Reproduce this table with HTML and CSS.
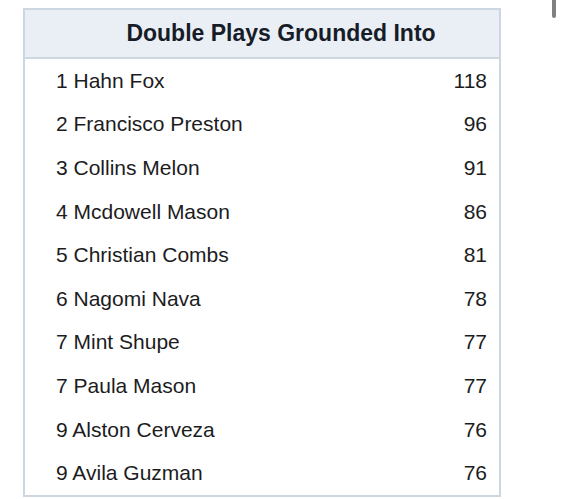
FILE: index.html
```html
<!DOCTYPE html>
<html>
<head>
<meta charset="utf-8">
<link rel="stylesheet" href="styles.css">
</head>
<body>
<div class="scroll-thumb"></div>
<table class="board">
  <thead>
    <tr><th colspan="2">Double Plays Grounded Into</th></tr>
  </thead>
  <tbody>
    <tr><td class="name">1 Hahn Fox</td><td class="val">118</td></tr>
    <tr><td class="name">2 Francisco Preston</td><td class="val">96</td></tr>
    <tr><td class="name">3 Collins Melon</td><td class="val">91</td></tr>
    <tr><td class="name">4 Mcdowell Mason</td><td class="val">86</td></tr>
    <tr><td class="name">5 Christian Combs</td><td class="val">81</td></tr>
    <tr><td class="name">6 Nagomi Nava</td><td class="val">78</td></tr>
    <tr><td class="name">7 Mint Shupe</td><td class="val">77</td></tr>
    <tr><td class="name">7 Paula Mason</td><td class="val">77</td></tr>
    <tr><td class="name">9 Alston Cerveza</td><td class="val">76</td></tr>
    <tr><td class="name">9 Avila Guzman</td><td class="val">76</td></tr>
  </tbody>
</table>
</body>
</html>
```

FILE: styles.css
```css
html, body {
  margin: 0;
  padding: 0;
  background: #ffffff;
}
body {
  padding: 8px 0 0 23px;
  font-family: "Liberation Sans", Arial, sans-serif;
  color: #1c1c1e;
}
.scroll-thumb {
  position: absolute;
  left: 552px;
  top: 0;
  width: 4px;
  height: 18px;
  background: #808080;
  border-radius: 0 0 2px 2px;
}
.board {
  width: 478px;
  border-collapse: collapse;
  border: 2px solid #ccd7e2;
}
.board th {
  height: 47px;
  padding: 0 0 0 38px;
  background: #e9eff5;
  border-bottom: 2px solid #ccd7e2;
  font-size: 23px;
  font-weight: bold;
  text-align: center;
  color: #171c28;
}
.board td {
  height: 43.6px;
  padding: 0;
  font-size: 21px;
}
.board .name {
  padding-left: 31px;
}
.board .val {
  text-align: right;
  padding-right: 12px;
}
```
